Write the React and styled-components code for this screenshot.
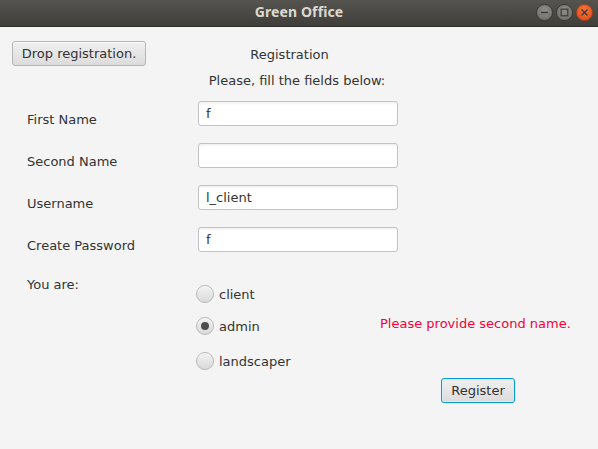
import React from "react";
import styled, { createGlobalStyle } from "styled-components";

const GlobalStyle = createGlobalStyle`
  html, body {
    margin: 0;
    padding: 0;
    background: #f4f4f4;
  }
  * { box-sizing: border-box; }
`;

const Window = styled.div`
  width: 598px;
  height: 449px;
  display: flex;
  flex-direction: column;
  background: #f4f4f4;
  font-family: "DejaVu Sans", "Liberation Sans", sans-serif;
  font-size: 13px;
  color: #333333;
  overflow: hidden;
`;

const TitleBar = styled.div`
  height: 27px;
  flex: none;
  display: grid;
  grid-template-columns: 1fr auto 1fr;
  align-items: center;
  background: linear-gradient(#56544f, #3f3e3a);
  border-bottom: 1px solid #2f2e2b;
`;

const TitleText = styled.div`
  grid-column: 2;
  margin-top: -3px;
  font-family: "Noto Sans", "DejaVu Sans", sans-serif;
  font-weight: 700;
  font-size: 14px;
  color: #dcd8cf;
  letter-spacing: 0.1px;
`;

const Controls = styled.div`
  justify-self: end;
  display: flex;
  gap: 3px;
  padding-right: 5px;
  margin-top: -2px;
`;

const WinButton = styled.div`
  width: 17px;
  height: 17px;
  border-radius: 50%;
  display: flex;
  align-items: center;
  justify-content: center;
  background: ${(p) =>
    p.$close
      ? "radial-gradient(circle at 50% 35%, #f4733f, #df4a16)"
      : "radial-gradient(circle at 50% 35%, #8e8c86, #6d6b66)"};
  border: 1px solid ${(p) => (p.$close ? "#b3400f" : "#3a3935")};
`;

const Body = styled.div`
  flex: 1;
  padding: 14px 0 0 12px;
  display: flex;
  flex-direction: column;
`;

const TopRow = styled.div`
  display: flex;
  align-items: flex-start;
`;

const Button = styled.button`
  height: 25px;
  padding: 0 8px;
  font-family: inherit;
  font-size: 13px;
  color: #333333;
  border-radius: 3px;
  border: 1px solid ${(p) => (p.$focused ? "#039ed3" : "#b5b5b5")};
  box-shadow: ${(p) =>
    p.$focused ? "inset 0 0 0 1px #d6eef8" : "inset 0 1px 0 #fbfbfb"};
  background: linear-gradient(#f0f0f0, #dcdcdc);
  line-height: 23px;
  width: ${(p) => p.$width}px;
`;

const Heading = styled.div`
  width: 294px;
  display: flex;
  flex-direction: column;
  align-items: center;
`;

const HeadTitle = styled.div`
  margin-top: 6px;
  line-height: 16px;
  padding-right: 7px;
`;

const HeadSub = styled.div`
  margin-top: 10px;
  line-height: 16px;
  padding-left: 8px;
`;

const FieldGrid = styled.div`
  margin: 12px 0 0 15px;
  display: grid;
  grid-template-columns: 171px 200px;
  grid-auto-rows: 42px;
`;

const Label = styled.div`
  line-height: 16px;
  padding-top: ${(p) => p.$top ?? 11}px;
`;

const TextField = styled.input`
  width: 200px;
  height: 25px;
  padding: 0 7px;
  font-family: inherit;
  font-size: 13px;
  color: #333333;
  border: 1px solid #c2c2c2;
  border-radius: 3px;
  background: linear-gradient(#f0f0f0 0px, #ffffff 3px);
  outline: none;
`;

const ChoiceGrid = styled.div`
  margin-left: 15px;
  display: grid;
  grid-template-columns: 171px 181px auto;
  align-items: start;
`;

const RadioList = styled.div`
  margin-top: 16px;
  display: flex;
  flex-direction: column;
  gap: 14px;

  & > :last-child {
    margin-top: 3px;
  }
`;

const RadioItem = styled.div`
  display: flex;
  align-items: center;
  gap: 5px;
  height: 18px;
  margin-left: -2px;
`;

const RadioCircle = styled.span`
  width: 18px;
  height: 18px;
  border-radius: 50%;
  border: 1px solid #b8b8b8;
  background: linear-gradient(#f2f2f2, #dadada);
  box-shadow: inset 0 1px 0 #fafafa;
  display: flex;
  align-items: center;
  justify-content: center;

  &::after {
    content: "";
    width: 8px;
    height: 8px;
    border-radius: 50%;
    background: ${(p) => (p.$checked ? "#4d4d4d" : "transparent")};
  }
`;

const SideColumn = styled.div`
  display: flex;
  flex-direction: column;
  align-items: flex-start;
`;

const ErrorText = styled.div`
  margin-top: 47px;
  margin-left: 1px;
  line-height: 16px;
  color: #f2003c;
  white-space: nowrap;
`;

const RegisterButton = styled(Button)`
  margin: 46px 0 0 62px;
`;

const MinusIcon = () => (
  <svg width="9" height="9" viewBox="0 0 9 9">
    <path d="M1 4.5h7" stroke="#3c3b37" strokeWidth="1.4" />
  </svg>
);

const SquareIcon = () => (
  <svg width="9" height="9" viewBox="0 0 9 9">
    <rect x="1.2" y="1.2" width="6.6" height="6.6" fill="none" stroke="#3c3b37" strokeWidth="1.2" />
  </svg>
);

const CloseIcon = () => (
  <svg width="9" height="9" viewBox="0 0 9 9">
    <path d="M1.5 1.5l6 6M7.5 1.5l-6 6" stroke="#3c3b37" strokeWidth="1.4" />
  </svg>
);

const App = () => {
  const fields = [
    { label: "First Name", value: "f" },
    { label: "Second Name", value: "" },
    { label: "Username", value: "l_client" },
    { label: "Create Password", value: "f" },
  ];
  const roles = [
    { name: "client", checked: false },
    { name: "admin", checked: true },
    { name: "landscaper", checked: false },
  ];

  return (
    <>
      <GlobalStyle />
      <Window>
        <TitleBar>
          <TitleText>Green Office</TitleText>
          <Controls>
            <WinButton><MinusIcon /></WinButton>
            <WinButton><SquareIcon /></WinButton>
            <WinButton $close><CloseIcon /></WinButton>
          </Controls>
        </TitleBar>
        <Body>
          <TopRow>
            <Button $width={134}>Drop registration.</Button>
            <Heading>
              <HeadTitle>Registration</HeadTitle>
              <HeadSub>Please, fill the fields below:</HeadSub>
            </Heading>
          </TopRow>
          <FieldGrid>
            {fields.map((f) => (
              <React.Fragment key={f.label}>
                <Label>{f.label}</Label>
                <TextField value={f.value} readOnly />
              </React.Fragment>
            ))}
          </FieldGrid>
          <ChoiceGrid>
            <Label $top={8}>You are:</Label>
            <RadioList>
              {roles.map((r) => (
                <RadioItem key={r.name}>
                  <RadioCircle $checked={r.checked} />
                  {r.name}
                </RadioItem>
              ))}
            </RadioList>
            <SideColumn>
              <ErrorText>Please provide second name.</ErrorText>
              <RegisterButton $focused $width={74}>Register</RegisterButton>
            </SideColumn>
          </ChoiceGrid>
        </Body>
      </Window>
    </>
  );
};

export default App;
